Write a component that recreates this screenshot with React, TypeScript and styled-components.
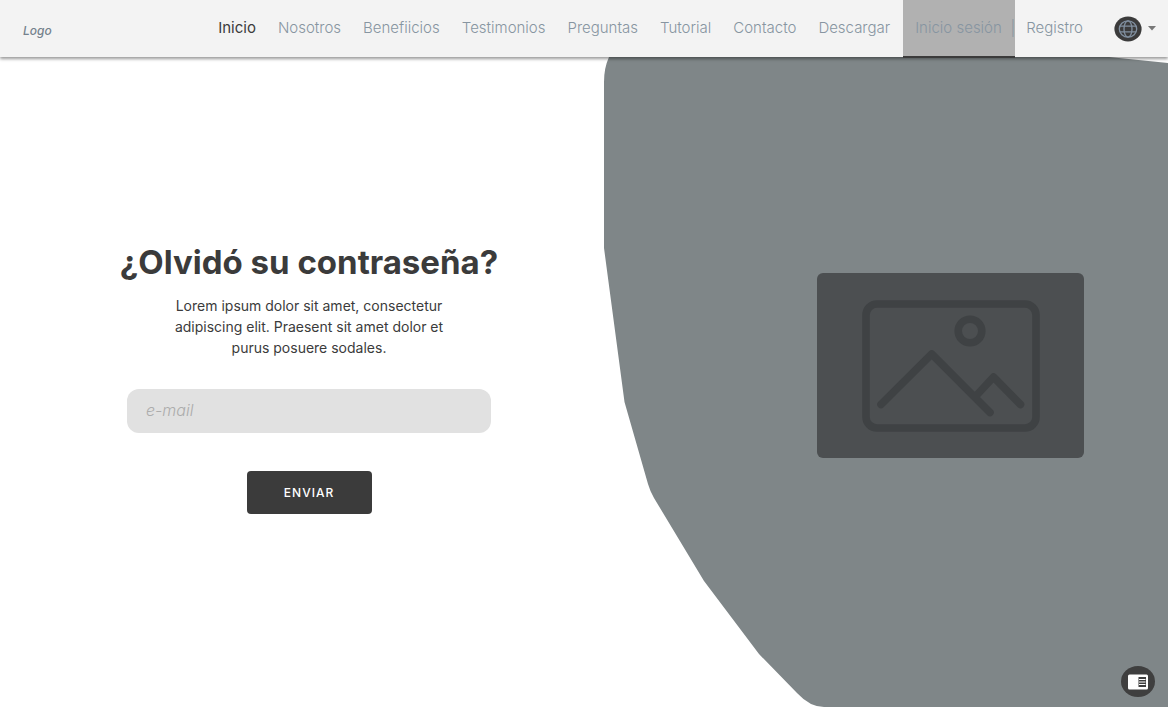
import React from "react";
import styled, { createGlobalStyle } from "styled-components";

const GlobalStyle = createGlobalStyle`
  *, *::before, *::after { box-sizing: border-box; }
  body {
    margin: 0;
    background: #fff;
    color: #3b3b3b;
    font-family: Inter, "Liberation Sans", sans-serif;
  }
`;

const Page = styled.div`
  display: flex;
  flex-direction: column;
  min-height: 100vh;
`;

const Header = styled.header`
  position: relative;
  z-index: 1;
  display: flex;
  align-items: stretch;
  height: 57px;
  padding: 0 12px 0 23px;
  background: #f3f3f3;
  box-shadow: 0 2px 3px rgba(0, 0, 0, 0.4);
`;

const Logo = styled.a`
  align-self: center;
  margin-right: auto;
  padding-top: 4px;
  color: #74818c;
  font-size: 12px;
  font-style: italic;
  font-weight: 500;
  text-decoration: none;
`;

const Nav = styled.nav`
  display: flex;
`;

const NavList = styled.ul`
  display: flex;
  margin: 0;
  padding: 0;
  list-style: none;
`;

const NavItem = styled.li`
  display: flex;
`;

const NavLink = styled.a<{ $current?: boolean }>`
  padding: 17px 11px 0;
  color: ${(p) => (p.$current ? "#3b3b3b" : "#8795a1")};
  font-size: 15px;
  font-weight: ${(p) => (p.$current ? 400 : 300)};
  line-height: 21px;
  white-space: nowrap;
  text-decoration: none;
`;

const SessionLink = styled(NavLink)`
  display: flex;
  justify-content: space-between;
  width: 112px;
  height: 58px;
  margin-left: 2px;
  padding: 17px 0 0 12px;
  border-bottom: 2px solid #3b3b3b;
  background: #b1b1b1;
`;

const LanguageButton = styled.button`
  display: flex;
  align-items: center;
  gap: 6px;
  margin-left: 20px;
  padding: 0;
  border: 0;
  background: none;
  cursor: pointer;
`;

const Hero = styled.main`
  display: grid;
  flex: 1;
  grid-template-columns: 604fr 564fr;
`;

const Form = styled.form`
  display: flex;
  flex-direction: column;
  align-items: center;
  justify-content: center;
  padding: 0 0 8px 14px;
`;

const Title = styled.h1`
  margin: 0 0 13px;
  font-size: 33px;
  font-weight: 700;
  line-height: 40px;
  white-space: nowrap;
`;

const Lead = styled.p`
  max-width: 290px;
  margin: 0 0 31px;
  font-size: 14px;
  line-height: 21px;
  text-align: center;
`;

const EmailInput = styled.input`
  width: 364px;
  max-width: 100%;
  height: 44px;
  margin-bottom: 38px;
  padding: 0 19px 2px;
  border: 0;
  border-radius: 12px;
  background: #e1e1e1;
  color: #3b3b3b;
  font-family: inherit;
  font-size: 16px;

  &::placeholder {
    color: #acacac;
    font-style: italic;
    font-weight: 300;
    opacity: 1;
  }
`;

const SubmitButton = styled.button`
  width: 125px;
  height: 43px;
  padding: 0;
  border: 0;
  border-radius: 4px;
  background: #3b3b3b;
  color: #fff;
  font-family: inherit;
  font-size: 12px;
  font-weight: 500;
  letter-spacing: 1px;
  cursor: pointer;
`;

const Showcase = styled.section`
  display: grid;
  grid-template: 1fr / 1fr;
`;

const Backdrop = styled.svg`
  display: block;
  grid-area: 1 / 1;
  width: 100%;
  height: 100%;
  min-height: 0;
  contain: size;
`;

const PictureCard = styled.div`
  z-index: 1;
  display: grid;
  grid-area: 1 / 1;
  place-items: center;
  place-self: center end;
  width: 267px;
  height: 185px;
  margin: 0 84px 33px 0;
  border-radius: 6px;
  background: #4c4f51;
`;

const ReaderButton = styled.button`
  position: fixed;
  right: 13px;
  bottom: 10px;
  z-index: 2;
  display: grid;
  place-items: center;
  width: 34px;
  height: 31px;
  padding: 0;
  border: 0;
  border-radius: 50%;
  background: #3f3f3f;
  cursor: pointer;
`;

const links = [
  "Inicio",
  "Nosotros",
  "Benefiicios",
  "Testimonios",
  "Preguntas",
  "Tutorial",
  "Contacto",
  "Descargar",
];

function GlobeIcon() {
  return (
    <svg width="28" height="26" viewBox="0 0 28 26" aria-hidden="true">
      <ellipse cx="14" cy="13" rx="13.6" ry="12.5" fill="#3b3b3b" />
      <g fill="none" stroke="#8190a0" strokeWidth="1.3">
        <ellipse cx="14" cy="13" rx="8.7" ry="8.2" />
        <ellipse cx="14" cy="13" rx="4" ry="8.2" />
        <path d="M6 10.2h16M6 15.8h16" />
      </g>
    </svg>
  );
}

function PictureIcon() {
  return (
    <svg width="178" height="132" viewBox="0 0 178 132" role="img" aria-label="Imagen">
      <g fill="none" stroke="#3f4244" strokeWidth="7.6" strokeLinecap="round" strokeLinejoin="round">
        <rect x="4" y="4" width="170" height="124" rx="11" />
        <circle cx="108" cy="31" r="11.8" />
        <path d="M19 104.5L69.7 54L128 112.5M113 97L131.5 77L158.5 104.5" />
      </g>
    </svg>
  );
}

function ReaderIcon() {
  return (
    <svg width="20" height="16" viewBox="0 0 20 16" aria-hidden="true">
      <rect x="0" y="0.5" width="20" height="15" rx="1.5" fill="#fff" />
      <rect x="10.5" y="3" width="7.5" height="10" fill="#3f3f3f" />
      <path d="M11 5.5h6.500M11 8h6.500M11 10.500h6.500" stroke="#fff" strokeWidth="1.2" />
    </svg>
  );
}

export default function App() {
  return (
    <Page>
      <GlobalStyle />
      <Header>
        <Logo href="#">Logo</Logo>
        <Nav aria-label="Principal">
          <NavList>
            {links.map((label, i) => (
              <NavItem key={label}>
                <NavLink href="#" $current={i === 0}>
                  {label}
                </NavLink>
              </NavItem>
            ))}
            <NavItem>
              <SessionLink href="#">
                <span>Inicio sesión</span>
                <span aria-hidden="true">|</span>
              </SessionLink>
            </NavItem>
            <NavItem>
              <NavLink href="#">Registro</NavLink>
            </NavItem>
          </NavList>
        </Nav>
        <LanguageButton type="button" aria-label="Idioma">
          <GlobeIcon />
          <svg width="8" height="5" viewBox="0 0 8 5" aria-hidden="true">
            <path d="M0 0h8L4 4.5z" fill="#777" />
          </svg>
        </LanguageButton>
      </Header>
      <Hero>
        <Form onSubmit={(e) => e.preventDefault()}>
          <Title>¿Olvidó su contraseña?</Title>
          <Lead>
            Lorem ipsum dolor sit amet, consectetur adipiscing elit. Praesent sit amet dolor et
            purus posuere sodales.
          </Lead>
          <EmailInput type="email" placeholder="e-mail" aria-label="e-mail" />
          <SubmitButton type="submit">ENVIAR</SubmitButton>
        </Form>
        <Showcase>
          <Backdrop viewBox="0 0 564 650" preserveAspectRatio="none" aria-hidden="true">
            <path
              d="M5 0Q0 11 0 25V191L20.5 345L44 427Q46 434 50 441L100 524L155 597L193 636Q206 650 220 650H564V6L505 0Z"
              fill="#7f8688"
            />
          </Backdrop>
          <PictureCard>
            <PictureIcon />
          </PictureCard>
        </Showcase>
      </Hero>
      <ReaderButton type="button" aria-label="Modo lectura">
        <ReaderIcon />
      </ReaderButton>
    </Page>
  );
}
